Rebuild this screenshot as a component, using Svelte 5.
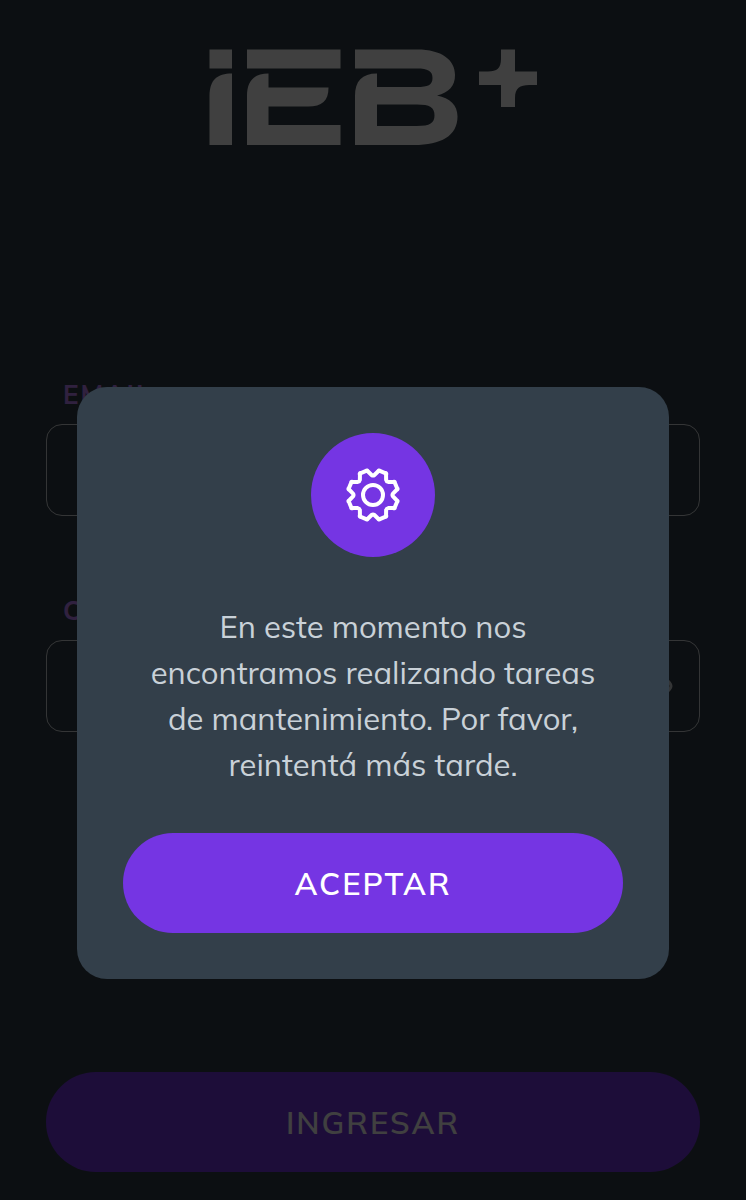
<script lang="ts">
	let email = $state('');
	let password = $state('');
	let showPassword = $state(false);
	let showNotice = $state(true);

	const closeNotice = () => {
		showNotice = false;
	};

	const polar = (radius: number, degrees: number) => {
		const angle = (degrees * Math.PI) / 180;
		return `${(radius * Math.sin(angle)).toFixed(2)} ${(-radius * Math.cos(angle)).toFixed(2)}`;
	};

	// Eight teeth, with a rounded valley every 45 degrees
	const gearPath = () => {
		let path = '';
		for (let i = 0; i < 8; i++) {
			const start = i * 45;
			path += `${i === 0 ? 'M' : 'L'}${polar(20, start - 4)} Q${polar(19, start)} ${polar(20, start + 4)} `;
			path += `L${polar(24, start + 12)} Q${polar(26, start + 13)} ${polar(25, start + 16)} `;
			path += `L${polar(25, start + 29)} Q${polar(26, start + 32)} ${polar(24, start + 33)} `;
		}
		return path + 'Z';
	};
</script>

<main class="page">
	<svg class="logo" viewBox="0 0 328 96" role="img" aria-label="iEB+">
		<path d="M.5.5H23V19.5H.5Z" />
		<path d="M.5 96V47C.5 31 8 24.5 23 24.5V96Z" />
		<path d="M38 .5H131.5V19.5H38Z" />
		<path d="M38 96V47C38 32 45 24.5 59.5 24.5V38.5H119.5C119.5 52 113 57.5 99 57.5H59.5V76H131.5V96Z" />
		<path
			fill-rule="evenodd"
			d="M146 .5H208C233 .5 246 11 246 26C246 37 240 43.5 228 46.5C241 49 248.5 56 248.5 67.5C248.5 87 232 96 205 96H146V47C146 32 153 24.5 168 24.5V38H208C219 38 223.5 36 223.5 29C223.5 22 219 19.5 208 19.5H146ZM168 55.5V77H208C221 77 225.5 74 225.5 66.5C225.5 58.5 221 55.5 208 55.5Z"
		/>
		<path d="M292 .5H306V22.5H328V36H320C311 36 306 39 306 49V58H292V36H270V22.5H279C288 22.5 292 19 292 10Z" />
	</svg>

	<form class="login" onsubmit={(event) => event.preventDefault()}>
		<label for="email">EMAIL</label>
		<div class="field">
			<input id="email" type="email" bind:value={email} />
		</div>

		<label for="password">CLAVE</label>
		<div class="field">
			<input id="password" type={showPassword ? 'text' : 'password'} bind:value={password} />
			<button
				class="toggle"
				type="button"
				aria-label="Mostrar clave"
				onclick={() => (showPassword = !showPassword)}
			>
				<svg viewBox="0 0 48 32">
					<path d="M2 16C2 13 11 3 24 3S46 13 46 16S37 29 24 29S2 19 2 16Z" />
					<circle cx="24" cy="16" r="7" />
				</svg>
			</button>
		</div>

		<button class="btn submit" type="submit">INGRESAR</button>
	</form>
</main>

{#if showNotice}
	<div class="modal-backdrop">
		<div class="modal" role="dialog" aria-modal="true" aria-describedby="notice-text">
			<div class="modal-icon">
				<svg viewBox="-28 -28 56 56" aria-hidden="true">
					<path d={gearPath()} />
					<circle r="10" />
				</svg>
			</div>
			<p id="notice-text">
				En este momento nos encontramos realizando tareas de mantenimiento. Por favor, reintentá más
				tarde.
			</p>
			<button class="btn" onclick={closeNotice}>ACEPTAR</button>
		</div>
	</div>
{/if}

<style>
	:global(body) {
		background: #333f4a;
		font-family: Mulish, Lato, sans-serif;
	}

	.page {
		box-sizing: border-box;
		min-height: 100vh;
		display: flex;
		flex-direction: column;
		padding: 49px 46px 28px;
	}

	.logo {
		width: 328px;
		align-self: center;
		fill: #fff;
	}

	.login {
		flex: 1;
		display: flex;
		flex-direction: column;
		margin-top: 231px;
	}

	label {
		align-self: flex-start;
		margin-left: 17px;
		color: #c084fc;
		font-size: 26px;
		font-weight: 700;
		line-height: 38px;
		letter-spacing: 2px;
	}

	.field {
		box-sizing: border-box;
		height: 92px;
		display: flex;
		align-items: center;
		margin: 10px 0 76px;
		padding: 0 26px;
		border: 1px solid #d0d4d8;
		border-radius: 16px;
	}

	.field input {
		flex: 1;
		min-width: 0;
		border: none;
		outline: none;
		background: none;
		color: #fff;
		font: inherit;
		font-size: 31px;
	}

	.toggle {
		padding: 0;
		border: none;
		background: none;
		cursor: pointer;
	}

	.toggle svg {
		display: block;
		width: 48px;
		fill: none;
		stroke: #d0d4d8;
		stroke-width: 3;
		stroke-linejoin: round;
	}

	.btn {
		width: 100%;
		height: 100px;
		border: none;
		border-radius: 50px;
		background: #7535e3;
		color: #fff;
		font-family: inherit;
		font-size: 31px;
		font-weight: 600;
		letter-spacing: 2px;
		cursor: pointer;
	}

	.submit {
		margin-top: auto;
	}

	/* Modal backdrop */
	.modal-backdrop {
		position: fixed;
		inset: 0;
		display: flex;
		justify-content: center;
		align-items: flex-start;
		padding: 387px 77px 0;
		background: rgba(0, 0, 0, 0.75);
	}

	/* Modal box */
	.modal {
		box-sizing: border-box;
		width: 100%;
		max-width: 592px;
		display: flex;
		flex-direction: column;
		align-items: center;
		padding: 46px;
		border-radius: 30px;
		background: #333f4a;
		text-align: center;
	}

	.modal-icon {
		width: 124px;
		height: 124px;
		display: grid;
		place-items: center;
		border-radius: 50%;
		background: #7535e3;
	}

	.modal-icon svg {
		width: 56px;
		fill: none;
		stroke: #fff;
		stroke-width: 4;
		stroke-linejoin: round;
	}

	.modal p {
		margin: 47px 0 45px;
		padding: 0 16px;
		color: #c9d1d8;
		font-size: 31px;
		line-height: 46px;
	}
</style>
